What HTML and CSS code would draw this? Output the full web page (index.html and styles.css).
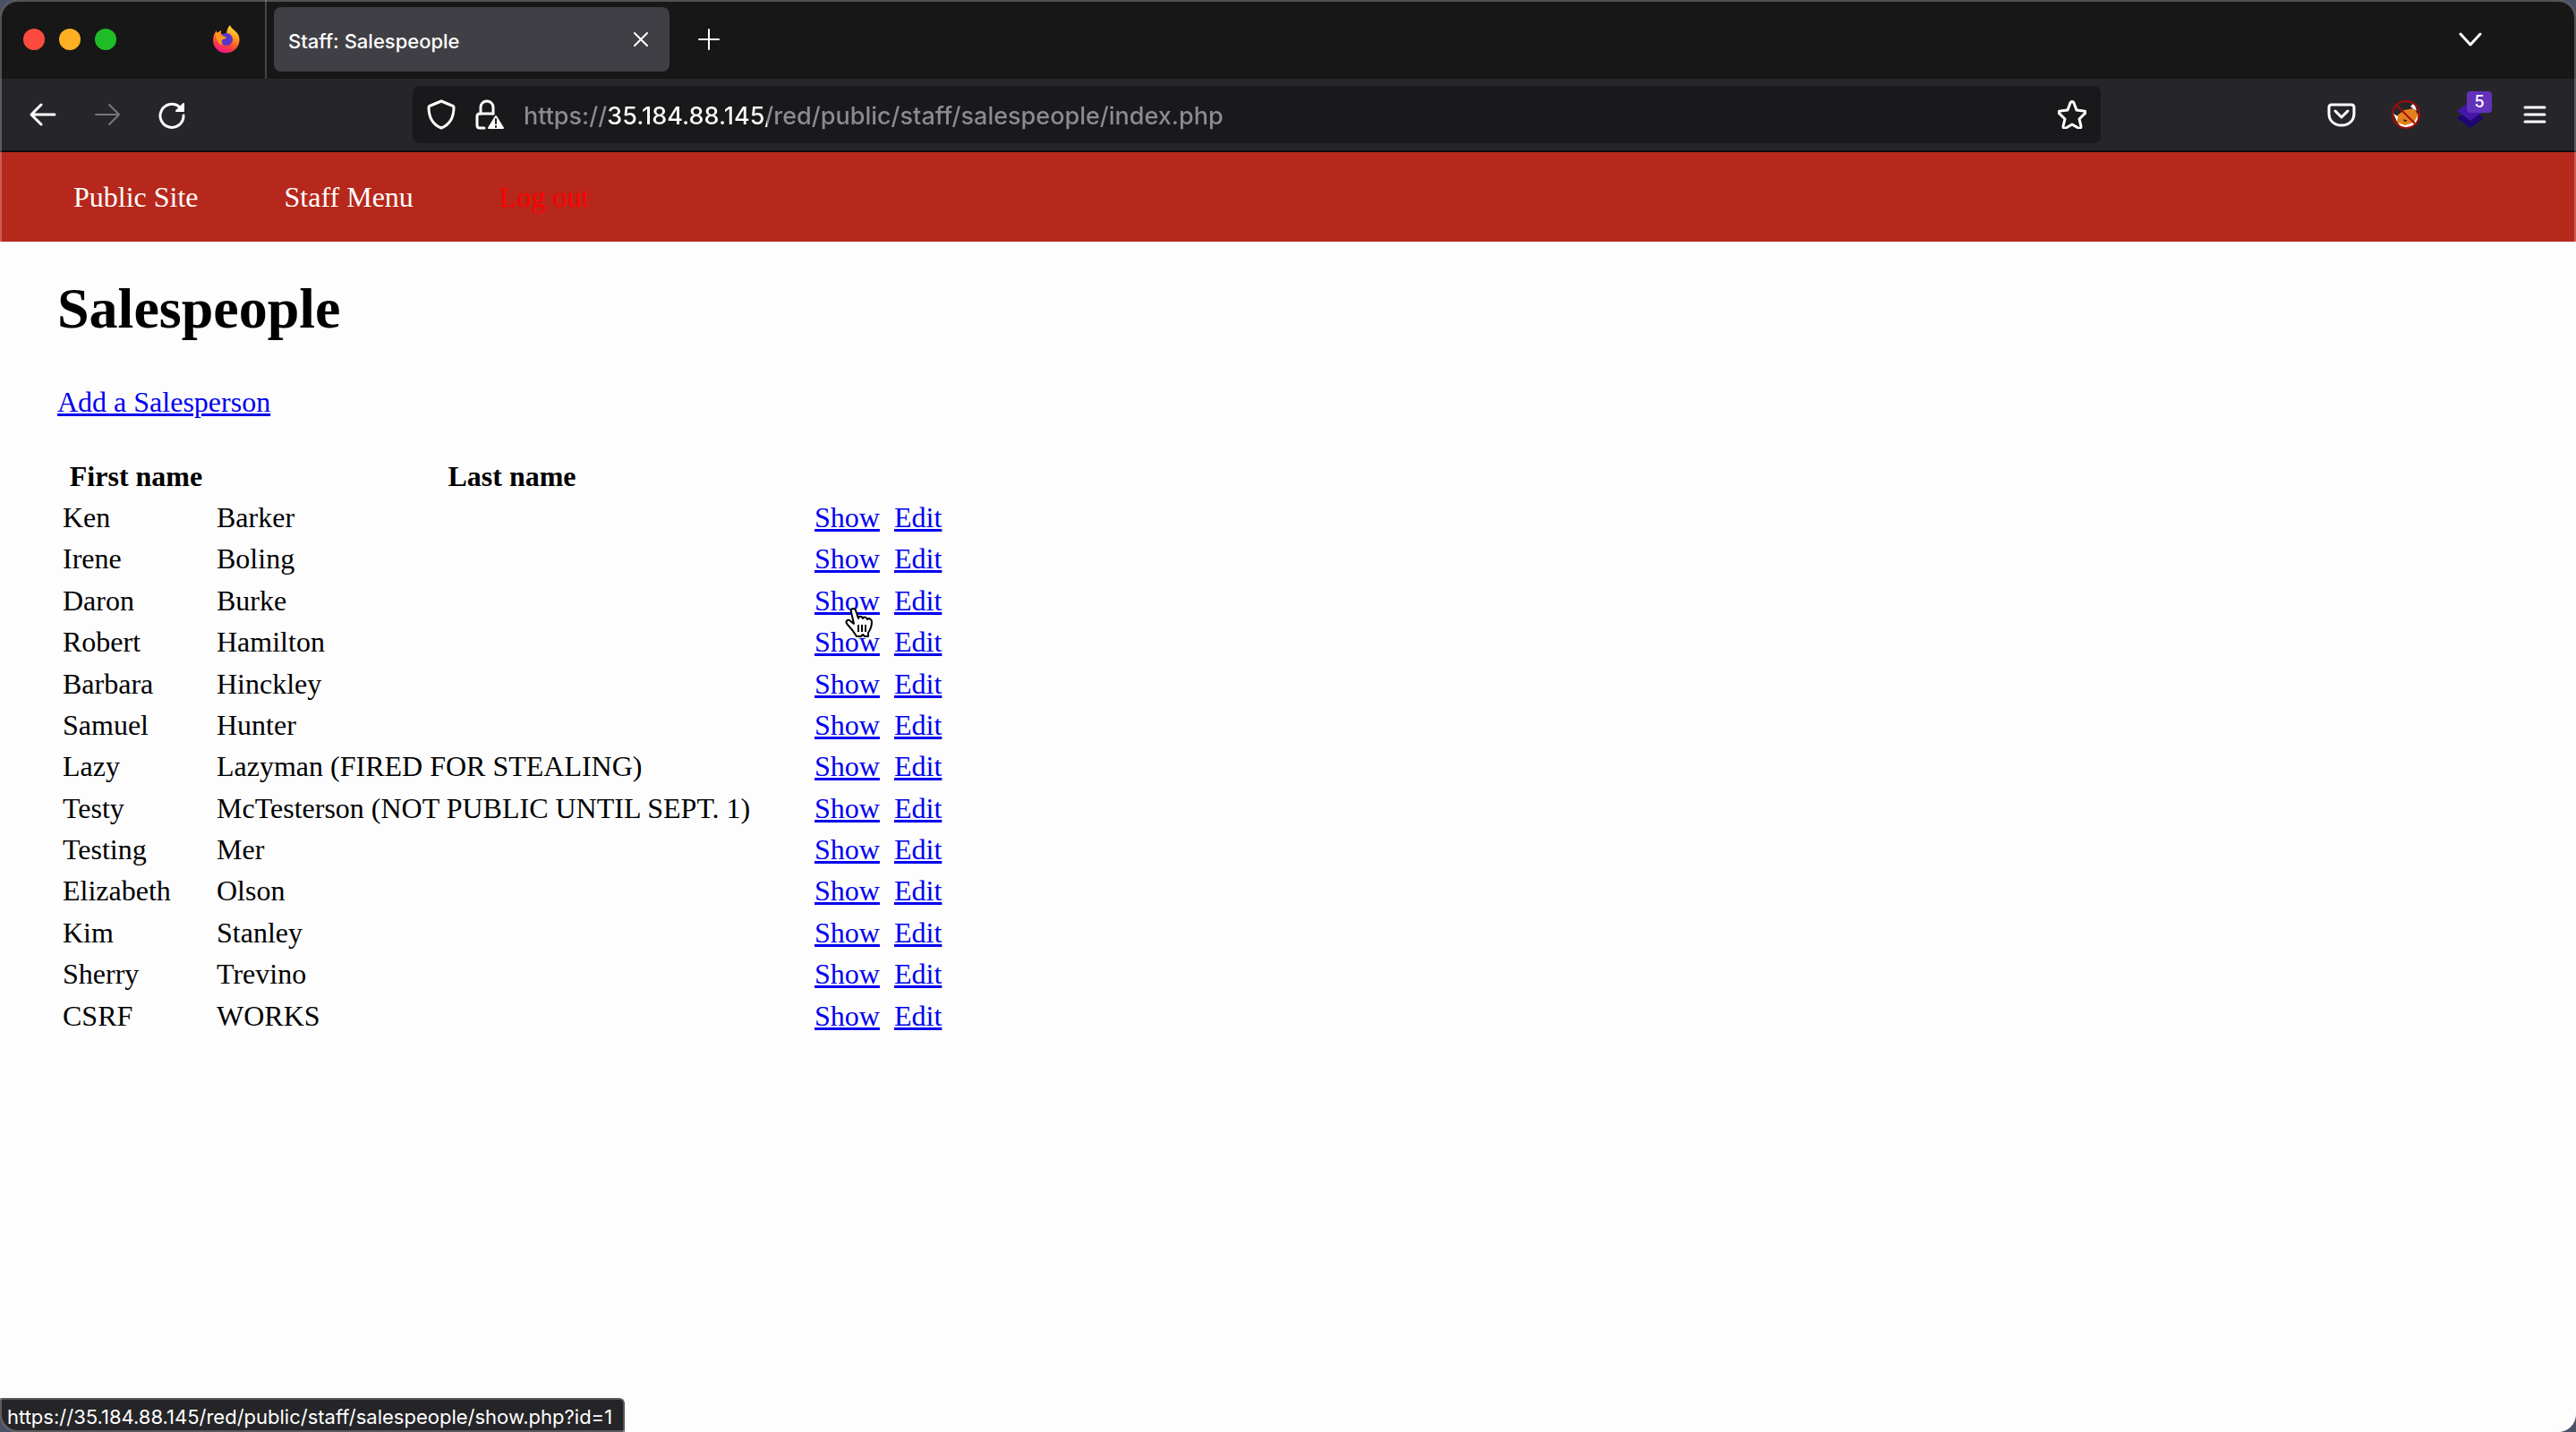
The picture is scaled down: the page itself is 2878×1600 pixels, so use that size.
FILE: index.html
```html
<!DOCTYPE html>
<html lang="en">
<head>
<meta charset="utf-8">
<title>Staff: Salespeople</title>
<link rel="stylesheet" href="styles.css">
</head>
<body>
<div class="window">
  <div class="titlebar">
    <div class="lights">
      <button class="light close" aria-label="Close window"></button>
      <button class="light minimize" aria-label="Minimize window"></button>
      <button class="light maximize" aria-label="Zoom window"></button>
    </div>
    <button class="pinned" aria-label="Firefox">
      <svg width="32" height="34" viewBox="0 0 32 34">
        <defs>
          <linearGradient id="fire" x1="0.8" y1="0" x2="0.4" y2="1">
            <stop offset="0" stop-color="#ffe63c"/><stop offset="0.4" stop-color="#ff9a1e"/>
            <stop offset="0.7" stop-color="#ff4a2e"/><stop offset="1" stop-color="#f0148a"/>
          </linearGradient>
        </defs>
        <path fill="url(#fire)" d="M20 1c1 4 5 5 8 9 4 5 3 12-1 17-5 6-15 7-21 2C1 25 0 18 2 12c1-2 2-4 3-5v4c1-1 2-3 5-4v4c2 0 4 1 6 1 0-4 1-8 4-11z"/>
        <circle cx="16" cy="17" r="7" fill="#5b35c8"/>
        <path fill="#ff981f" d="M4 9c3 0 5 2 7 4 2 0 4 1 5 2-1 2-4 1-5 3-1 2 0 3 1 5-5 0-8-5-8-14z"/>
      </svg>
    </button>
    <div class="tab">
      <span class="tab-title">Staff: Salespeople</span>
      <button class="tab-close" aria-label="Close tab">
        <svg width="16" height="16" viewBox="0 0 16 16" fill="none" stroke="#fff" stroke-width="2" stroke-linecap="round"><path d="M1 1l14 14M15 1L1 15"/></svg>
      </button>
    </div>
    <button class="new-tab" aria-label="New tab">
      <svg width="24" height="24" viewBox="0 0 24 24" fill="none" stroke="#fff" stroke-width="2" stroke-linecap="round"><path d="M12 1v22M1 12h22"/></svg>
    </button>
    <button class="all-tabs" aria-label="List all tabs">
      <svg width="26" height="18" viewBox="0 0 26 18" fill="none" stroke="#fff" stroke-width="3" stroke-linecap="round" stroke-linejoin="round"><path d="M2 3l11 12L24 3"/></svg>
    </button>
  </div>

  <div class="toolbar">
    <div class="history">
      <button aria-label="Back">
        <svg width="32" height="32" viewBox="0 0 32 32" fill="none" stroke="#fff" stroke-width="3" stroke-linecap="round" stroke-linejoin="round"><path d="M29 16H3M14 5L3 16l11 11"/></svg>
      </button>
      <button aria-label="Forward" disabled>
        <svg width="32" height="32" viewBox="0 0 32 32" fill="none" stroke="#77777c" stroke-width="2" stroke-linecap="round" stroke-linejoin="round"><path d="M3 16h26M18 5l11 11-11 11"/></svg>
      </button>
      <button aria-label="Reload">
        <svg width="32" height="32" viewBox="0 0 32 32" fill="none" stroke="#fff" stroke-width="3" stroke-linecap="round"><path d="M29 17a13 13 0 1 1-4-9"/><path d="M29 4v8h-8z" fill="#fff" stroke-width="2" stroke-linejoin="round"/></svg>
      </button>
    </div>
    <form class="address">
      <button type="button" aria-label="Tracking protection">
        <svg width="32" height="34" viewBox="0 0 32 34" fill="none" stroke="#fff" stroke-width="3" stroke-linejoin="round"><path d="M16 2l12 5c1 0 2 1 2 2 0 10-4 19-14 23C6 28 2 19 2 9c0-1 1-2 2-2z"/></svg>
      </button>
      <button type="button" aria-label="Connection not secure">
        <svg width="32" height="34" viewBox="0 0 32 34" fill="none" stroke="#fff" stroke-width="3" stroke-linecap="round"><path d="M6 16V9c0-4 3-7 7-7s7 3 7 7v7"/><path d="M10 32H5c-2 0-3-1-3-3V19c0-2 1-3 3-3h15"/><path d="M23 19l8 13H15z" fill="#fff" stroke-width="2" stroke-linejoin="round"/><path d="M23 22v5M23 30v1" stroke="#1b1b1d" stroke-width="2"/></svg>
      </button>
      <input class="url" type="text" aria-label="Address" value="https://35.184.88.145/red/public/staff/salespeople/index.php">
      <button type="button" aria-label="Bookmark this page">
        <svg width="32" height="32" viewBox="0 0 32 32" fill="none" stroke="#fff" stroke-width="3" stroke-linejoin="round"><path d="M14 3c1-2 3-2 4 0l3 8 8 1c2 0 3 2 1 3l-6 6 2 8c0 2-1 3-3 2l-7-4-7 4c-2 1-3 0-3-2l2-8-6-6c-2-1-1-3 1-3l8-1z"/></svg>
      </button>
    </form>
    <div class="tools">
      <button aria-label="Save to Pocket">
        <svg width="32" height="32" viewBox="0 0 32 32" fill="none" stroke="#fff" stroke-width="3" stroke-linecap="round" stroke-linejoin="round"><path d="M5 5h22c2 0 3 1 3 3v7c0 8-6 13-14 13S2 23 2 15V8c0-2 1-3 3-3z"/><path d="M9 12l7 7 7-7"/></svg>
      </button>
      <button aria-label="FoxyProxy">
        <svg width="32" height="32" viewBox="0 0 32 32"><path fill="#e5801d" d="M5 18l9-7 11-2 5 8-5 10-14 3-5-6z"/><path fill="#fff" d="M2 15l5 3-1 6zM21 7l4-4 3 9zM7 25l8 3 10-3 4-8c1 8-4 13-12 13-5 0-9-2-10-5z"/><path fill="#2a1a10" d="M13 21l5 2-4 1z"/><circle cx="16" cy="16" r="15" fill="none" stroke="#a80b0b" stroke-width="2"/><path d="M6 6l20 20" stroke="#a80b0b" stroke-width="2"/></svg>
      </button>
      <button class="containers" aria-label="Extension, 5 items">
        <svg width="32" height="32" viewBox="0 0 32 32"><path fill="#1d0670" d="M1 20l15-11 15 11-15 11z"/><path fill="#4316a5" d="M1 12L16 1l15 11-15 11z"/></svg>
        <span class="badge">5</span>
      </button>
      <button aria-label="Menu">
        <svg width="32" height="24" viewBox="0 0 32 24" fill="none" stroke="#fff" stroke-width="3" stroke-linecap="round"><path d="M5 4h22M5 12h22M5 20h22"/></svg>
      </button>
    </div>
  </div>

  <nav class="site-nav">
    <a href="#">Public Site</a>
    <a href="#">Staff Menu</a>
    <a href="#" class="logout">Log out</a>
  </nav>

  <main class="content">
    <h1>Salespeople</h1>
    <p><a href="#">Add a Salesperson</a></p>
    <table class="people">
      <colgroup><col class="col-first"><col class="col-last"><col class="col-show"><col></colgroup>
      <tr><th>First name</th><th>Last name</th><td></td><td></td></tr>
      <tr><td>Ken</td><td>Barker</td><td><a href="#">Show</a></td><td><a href="#">Edit</a></td></tr>
      <tr><td>Irene</td><td>Boling</td><td><a href="#">Show</a></td><td><a href="#">Edit</a></td></tr>
      <tr><td>Daron</td><td>Burke</td><td><a href="#" class="hovered">Show<svg class="pointer" width="32" height="36" viewBox="0 0 32 36"><path fill="#fff" stroke="#000" stroke-width="2" stroke-linejoin="round" d="M7 3c2-2 4-1 5 1l3 9c0-3 4-3 5 0 1-2 4-2 5 1 2-2 5 0 5 3 0 6-2 9-4 12v4h-4l-2-2-2 2h-5c-3-5-5-8-10-13-3-3-1-6 2-5l5 4L7 6c0-1-1-2 0-3z"/><path stroke="#000" stroke-width="2" d="M15 20v8M19 20v8M23 20v8"/></svg></a></td><td><a href="#">Edit</a></td></tr>
      <tr><td>Robert</td><td>Hamilton</td><td><a href="#">Show</a></td><td><a href="#">Edit</a></td></tr>
      <tr><td>Barbara</td><td>Hinckley</td><td><a href="#">Show</a></td><td><a href="#">Edit</a></td></tr>
      <tr><td>Samuel</td><td>Hunter</td><td><a href="#">Show</a></td><td><a href="#">Edit</a></td></tr>
      <tr><td>Lazy</td><td>Lazyman (FIRED FOR STEALING)</td><td><a href="#">Show</a></td><td><a href="#">Edit</a></td></tr>
      <tr><td>Testy</td><td>McTesterson (NOT PUBLIC UNTIL SEPT. 1)</td><td><a href="#">Show</a></td><td><a href="#">Edit</a></td></tr>
      <tr><td>Testing</td><td>Mer</td><td><a href="#">Show</a></td><td><a href="#">Edit</a></td></tr>
      <tr><td>Elizabeth</td><td>Olson</td><td><a href="#">Show</a></td><td><a href="#">Edit</a></td></tr>
      <tr><td>Kim</td><td>Stanley</td><td><a href="#">Show</a></td><td><a href="#">Edit</a></td></tr>
      <tr><td>Sherry</td><td>Trevino</td><td><a href="#">Show</a></td><td><a href="#">Edit</a></td></tr>
      <tr><td>CSRF</td><td>WORKS</td><td><a href="#">Show</a></td><td><a href="#">Edit</a></td></tr>
    </table>
  </main>
  <div class="status">https://35.184.88.145/red/public/staff/salespeople/show.php?id=1</div>
</div>
</body>
</html>
```
FILE: styles.css
```css
* { box-sizing: border-box; }

body {
  margin: 0;
  background: #4a5266;
  font-family: "Liberation Serif", "Times New Roman", serif;
  font-size: 32px;
  line-height: 1.2;
  color: #000;
}

button {
  display: flex;
  align-items: center;
  justify-content: center;
  padding: 0;
  border: 0;
  background: none;
}

a { color: #0000ee; }

.window {
  position: relative;
  min-height: 100vh;
  overflow: hidden;
  border-radius: 20px;
  background: #fdfdfe;
}

/* thin light rim around the whole window */
.window::after {
  content: "";
  position: absolute;
  inset: 0;
  border-radius: 20px;
  box-shadow: inset 0 0 0 2px rgba(255, 255, 255, 0.25);
  pointer-events: none;
}

/* Title bar */
.titlebar {
  display: flex;
  align-items: center;
  height: 88px;
  padding-left: 26px;
  background: #171717;
  font-family: Inter, sans-serif;
}

.lights { display: flex; gap: 16px; }
.light { width: 24px; height: 24px; border-radius: 50%; }
.close { background: #fe4b40; }
.minimize { background: #feb024; }
.maximize { background: #1ebd28; }

.pinned {
  width: 168px;
  height: 88px;
  padding-left: 80px;
  border-right: 2px solid #45454a;
}

.tab {
  display: flex;
  align-items: center;
  justify-content: space-between;
  width: 442px;
  height: 72px;
  margin-left: 8px;
  padding: 0 22px 0 16px;
  border-radius: 8px;
  background: #403f45;
  color: #fff;
  font-size: 22px;
  font-weight: 500;
}

.tab-title { padding-top: 4px; }
.tab-close { width: 20px; height: 20px; }
.new-tab { width: 88px; height: 72px; }
.all-tabs { width: 80px; height: 72px; margin-left: auto; margin-right: 78px; }

/* Navigation toolbar */
.toolbar {
  display: flex;
  align-items: center;
  height: 82px;
  padding: 0 30px 0 32px;
  border-bottom: 2px solid #0c0c0d;
  background: #26262a;
  font-family: Inter, sans-serif;
}

.history { display: flex; gap: 40px; width: 429px; }

.address {
  display: flex;
  align-items: center;
  gap: 22px;
  flex: 1;
  height: 64px;
  padding: 0 16px;
  border-radius: 8px;
  background: #19191b;
}

.url {
  flex: 1;
  min-width: 0;
  padding: 2px 0 0;
  border: 0;
  font: 500 27px Inter, sans-serif;
  color: transparent;
  /* the host is picked out in white, the rest of the address is dimmed */
  background: linear-gradient(to right, #8c8c8f 93px, #fff 93px 272px, #8c8c8f 272px);
  -webkit-background-clip: text;
  background-clip: text;
}

.tools {
  display: flex;
  align-items: center;
  gap: 40px;
  margin-left: 253px;
}

.containers { position: relative; }

.badge {
  position: absolute;
  left: 12px;
  top: -10px;
  width: 28px;
  height: 24px;
  border-radius: 4px;
  background: #6232bd;
  color: #fff;
  font: 500 18px/24px Inter, sans-serif;
}

/* Site navigation */
.site-nav {
  display: flex;
  gap: 96px;
  padding: 31px 82px;
  background: #b6281b;
}

.site-nav a { color: #fff; text-decoration: none; }
.site-nav .logout { color: #ff0000; }

/* Page */
.content { padding: 37px 64px; }
h1 { margin: 0 0 46px; font-size: 64px; }
p { margin: 0 0 38px; }

.people {
  table-layout: fixed;
  width: 1000px;
  border-spacing: 4px;
}

.people th,
.people td { padding: 2px; text-align: left; white-space: nowrap; }
.people th { text-align: center; }
.col-first { width: 168px; }
.col-last { width: 664px; }
.col-show { width: 85px; }

.hovered { position: relative; }
.pointer { position: absolute; left: 34px; top: 25px; }

.status {
  position: absolute;
  left: 0;
  bottom: 0;
  padding: 2px 12px 0 8px;
  border: 2px solid #57575a;
  border-left: 0;
  border-bottom: 0;
  border-radius: 0 6px 0 0;
  background: #252528;
  color: #fff;
  font: 22px/34px Inter, sans-serif;
}
```
